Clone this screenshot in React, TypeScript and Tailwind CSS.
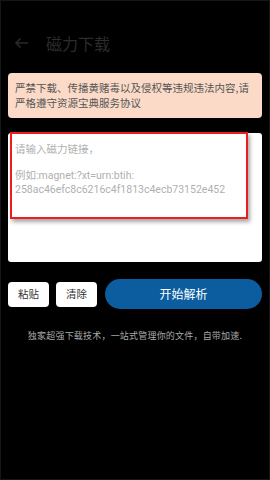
import React from "react";

const cjk = { fontFamily: '"Noto Sans CJK SC", "Noto Sans", sans-serif' };
const latin = { fontFamily: 'Roboto, "Noto Sans CJK SC", sans-serif' };

export default function App() {
  return (
    <div className="w-[270px] h-[480px] bg-black border border-[#161616] overflow-hidden" style={cjk}>
      {/* header */}
      <div className="flex items-center h-[30px] mt-[27px] pl-[13px]">
        <svg width="15" height="12" viewBox="0 0 15 12" fill="none" stroke="#2a2a2a" strokeWidth="1.6">
          <path d="M14 6H2M6.5 1.5 2 6l4.5 4.5" />
        </svg>
        <span className="ml-[17px] text-[16px] text-[#2c2c2c] leading-none">磁力下载</span>
      </div>

      {/* warning */}
      <div className="mx-[7px] mt-[15px] h-[45px] rounded-[4px] bg-[#fbdac7] px-[7px] pt-[7px] text-[10.5px] leading-[15px] text-[#555]">
        严禁下载、传播黄赌毒以及侵权等违规违法内容,请
        <br />
        严格遵守资源宝典服务协议
      </div>

      {/* input */}
      <div className="relative mx-[7px] mt-[15px] h-[129px] rounded-[3px] bg-white">
        <div className="px-[7px] pt-[9px] text-[10.5px] leading-[13.5px] text-[#b0b0b0]" style={latin}>
          <div style={cjk}>请输入磁力链接，</div>
          <div>&nbsp;</div>
          <div>例如:magnet:?xt=urn:btih:</div>
          <div>258ac46efc8c6216c4f1813c4ecb73152e452</div>
        </div>
        <div className="absolute left-[2px] top-[-1px] w-[238px] h-[87px] border-[2.5px] border-[#ee1c1c] shadow-[2px_3px_4px_rgba(0,0,0,0.35)]" />
      </div>

      {/* actions */}
      <div className="flex items-center mx-[7px] mt-[17px]">
        <button className="w-[41px] h-[25px] rounded-[4px] bg-white text-[10.5px] text-[#333]">粘贴</button>
        <button className="ml-[7px] w-[41px] h-[25px] rounded-[4px] bg-white text-[10.5px] text-[#333]">清除</button>
        <button className="ml-[8px] flex-1 h-[30px] rounded-full bg-[#0b5d9f] text-[12px] text-white">开始解析</button>
      </div>

      <div className="mt-[20px] text-center text-[9px] text-[#a8a8a8] tracking-[0.2px]">
        独家超强下载技术，一站式管理你的文件，自带加速.
      </div>
    </div>
  );
}
